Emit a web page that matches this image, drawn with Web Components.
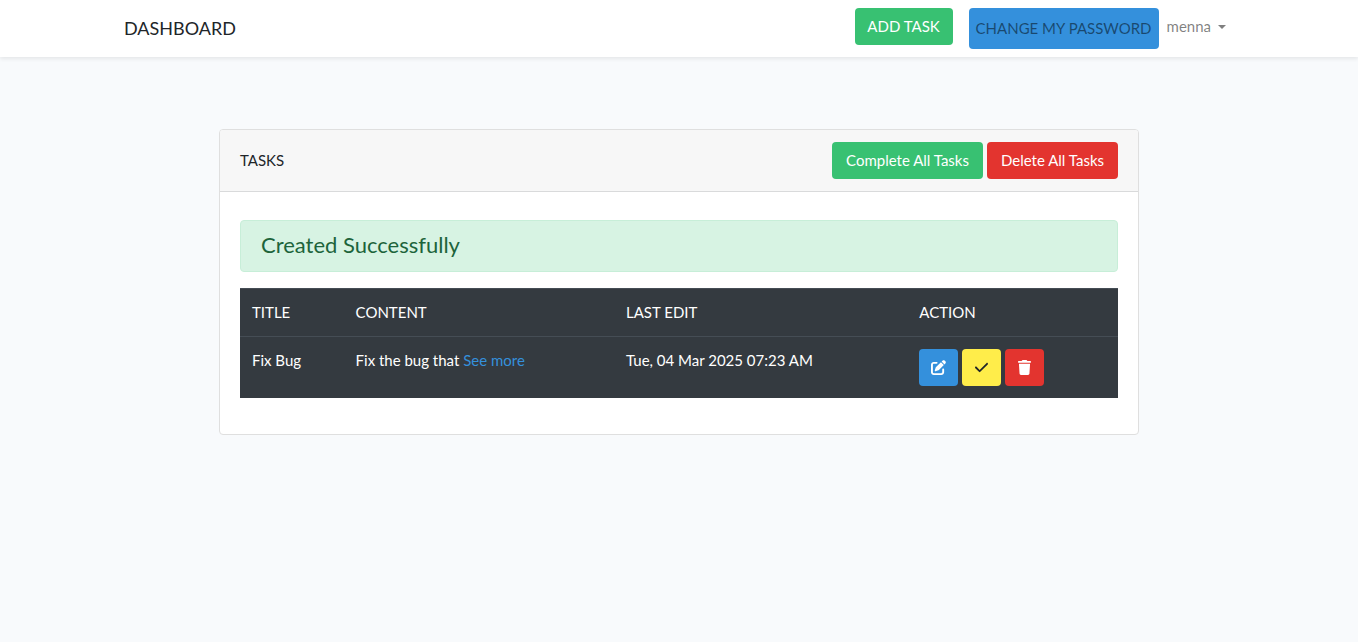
<!DOCTYPE html>
<html lang="en">
<head>
<meta charset="utf-8">
<meta name="viewport" content="width=device-width, initial-scale=1">
<title>Dashboard</title>
<style>
  body { margin: 0; min-height: 100vh; background: #f8fafc; color: #212529; font: 15px/23px Lato, "Open Sans", sans-serif; }
  main { padding: 72px 0 24px; }
  .brand { color: inherit; text-decoration: none; }
  .created { margin-bottom: 16px; }
  .add { --width: 98px; margin-right: 8px; }
  .complete { --width: 151px; }
  .delete { --width: 131px; }
</style>
</head>
<body>
<nav-bar>
  <a slot="brand" class="brand" href="#dashboard">DASHBOARD</a>
  <app-button class="add" tone="success">ADD TASK</app-button>
  <nav-pill href="#password">CHANGE MY PASSWORD</nav-pill>
  <user-menu>menna</user-menu>
</nav-bar>
<main>
  <panel-card>
    <span slot="title">TASKS</span>
    <app-button slot="actions" class="complete" tone="success">Complete All Tasks</app-button>
    <app-button slot="actions" class="delete" tone="danger">Delete All Tasks</app-button>
    <alert-box class="created">Created Successfully</alert-box>
    <task-table></task-table>
  </panel-card>
</main>

<script>
const define = (name, html) => customElements.define(name, class extends HTMLElement {
  constructor() {
    super();
    const template = document.createElement('template');
    template.innerHTML = html;
    this.attachShadow({ mode: 'open' }).append(template.content.cloneNode(true));
  }
  connectedCallback() {
    const link = this.shadowRoot.querySelector('a[data-link]');
    if (link) link.href = this.getAttribute('href') || '#';
    const label = this.getAttribute('label');
    if (label) this.shadowRoot.querySelector('button').setAttribute('aria-label', label);
  }
});

define('nav-bar', `
<style>
  :host { display: block; background: #fff; box-shadow: 0 2px 4px rgba(0,0,0,.08); position: relative; }
  nav { box-sizing: border-box; max-width: 1140px; margin: 0 auto; padding: 8px 15px; display: flex; justify-content: space-between; align-items: flex-start; }
  .brand { font-size: 18px; line-height: 40px; }
  .items { display: flex; align-items: flex-start; }
</style>
<nav><div class="brand"><slot name="brand"></slot></div><div class="items"><slot></slot></div></nav>`);

define('app-button', `
<style>
  :host { display: inline-block; --bg: #38c172; --fg: #fff; }
  :host([tone=danger]) { --bg: #e3342f; }
  :host([tone=primary]) { --bg: #3490dc; }
  :host([tone=warning]) { --bg: #ffed4a; --fg: #212529; }
  button { box-sizing: border-box; min-width: var(--width, 39px); height: 37px; padding: 0 8px; border: 0; border-radius: 4px; background: var(--bg); color: var(--fg); font: inherit; white-space: nowrap; cursor: pointer; display: flex; align-items: center; justify-content: center; }
</style>
<button type="button"><slot></slot></button>`);

define('nav-pill', `
<style>
  :host { display: block; margin-left: 8px; }
  a { box-sizing: border-box; display: block; min-width: 190px; padding: 9px 7px; border-radius: 4px; background: #3490dc; color: rgba(0,0,0,.5); text-align: center; text-decoration: none; white-space: nowrap; }
</style>
<a data-link><slot></slot></a>`);

define('user-menu', `
<style>
  :host { display: block; }
  button { padding: 7px 8px; border: 0; background: none; color: rgba(0,0,0,.5); font: inherit; display: flex; align-items: center; gap: 7px; cursor: pointer; }
  i { border: 4px solid transparent; border-top-color: currentColor; border-bottom: 0; }
</style>
<button type="button" aria-haspopup="true"><slot></slot><i></i></button>`);

define('panel-card', `
<style>
  :host { box-sizing: border-box; display: block; max-width: 920px; margin: 0 auto; border: 1px solid #dfdfdf; border-radius: 4px; background: #fff; overflow: hidden; }
  header { display: flex; align-items: center; justify-content: space-between; padding: 12px 20px; background: #f7f7f7; border-bottom: 1px solid #d9dadb; }
  .actions { display: flex; gap: 4px; }
  .body { padding: 28px 20px 36px; }
</style>
<header><slot name="title"></slot><div class="actions"><slot name="actions"></slot></div></header>
<div class="body"><slot></slot></div>`);

define('alert-box', `
<style>
  :host { box-sizing: border-box; display: block; padding: 11px 20px 13px; border: 1px solid #c7eed8; border-radius: 4px; background: #d7f3e3; color: #1d643b; font-size: 22px; line-height: 26px; }
</style>
<div role="status"><slot></slot></div>`);

define('task-table', `
<style>
  :host { display: block; }
  table { width: 100%; table-layout: fixed; border-collapse: separate; border-spacing: 0; background: #343a40; color: #fff; }
  .title { width: 11.8%; } .content { width: 30.8%; } .edit { width: 33.4%; }
  th, td { padding: 12px; border-top: 1px solid #454d55; text-align: left; vertical-align: top; font-weight: 400; white-space: nowrap; }
  a { color: #3490dc; text-decoration: none; }
  .tools { display: flex; gap: 4px; }
  svg { display: block; }
</style>
<table>
  <colgroup><col class="title"><col class="content"><col class="edit"><col></colgroup>
  <thead><tr><th scope="col">TITLE</th><th scope="col">CONTENT</th><th scope="col">LAST EDIT</th><th scope="col">ACTION</th></tr></thead>
  <tbody><tr>
    <td>Fix Bug</td>
    <td>Fix the bug that <a href="#more">See more</a></td>
    <td>Tue, 04 Mar 2025 07:23 AM</td>
    <td><div class="tools">
      <app-button tone="primary" label="Edit"><svg width="15" height="15" viewBox="0 0 512 512" fill="currentColor"><path d="M471.600 21.700c-21.900-21.900-57.300-21.900-79.200 0L362.300 51.700l97.900 97.900 30.100-30.100c21.900-21.900 21.900-57.300 0-79.200L471.600 21.700zm-299.200 220c-6.100 6.100-10.800 13.600-13.500 21.900l-29.600 88.800c-2.900 8.600-.6 18.100 5.800 24.600s15.900 8.700 24.600 5.800l88.800-29.600c8.200-2.700 15.700-7.400 21.900-13.500L437.700 172.300 339.700 74.300 172.400 241.700zM96 64C43 64 0 107 0 160V416c0 53 43 96 96 96H352c53 0 96-43 96-96V320c0-17.700-14.300-32-32-32s-32 14.300-32 32v96c0 17.700-14.300 32-32 32H96c-17.700 0-32-14.300-32-32V160c0-17.700 14.300-32 32-32h96c17.700 0 32-14.300 32-32s-14.300-32-32-32H96z"/></svg></app-button>
      <app-button tone="warning" label="Complete"><svg width="13" height="15" viewBox="0 0 448 512" fill="currentColor"><path d="M438.600 105.400c12.500 12.500 12.500 32.800 0 45.300l-256 256c-12.500 12.500-32.800 12.500-45.300 0l-128-128c-12.500-12.500-12.500-32.800 0-45.300s32.800-12.500 45.300 0L160 338.700 393.400 105.400c12.500-12.500 32.800-12.500 45.300 0z"/></svg></app-button>
      <app-button tone="danger" label="Delete"><svg width="13" height="15" viewBox="0 0 448 512" fill="currentColor"><path d="M135.200 17.700L128 32H32C14.300 32 0 46.300 0 64S14.300 96 32 96H416c17.700 0 32-14.300 32-32s-14.300-32-32-32H320l-7.200-14.300C307.400 6.800 296.300 0 284.200 0H163.800c-12.100 0-23.200 6.800-28.600 17.700zM416 128H32L53.200 467c1.600 25.300 22.600 45 47.900 45H346.900c25.300 0 46.300-19.700 47.900-45L416 128z"/></svg></app-button>
    </div></td>
  </tr></tbody>
</table>`);
</script>
</body>
</html>
